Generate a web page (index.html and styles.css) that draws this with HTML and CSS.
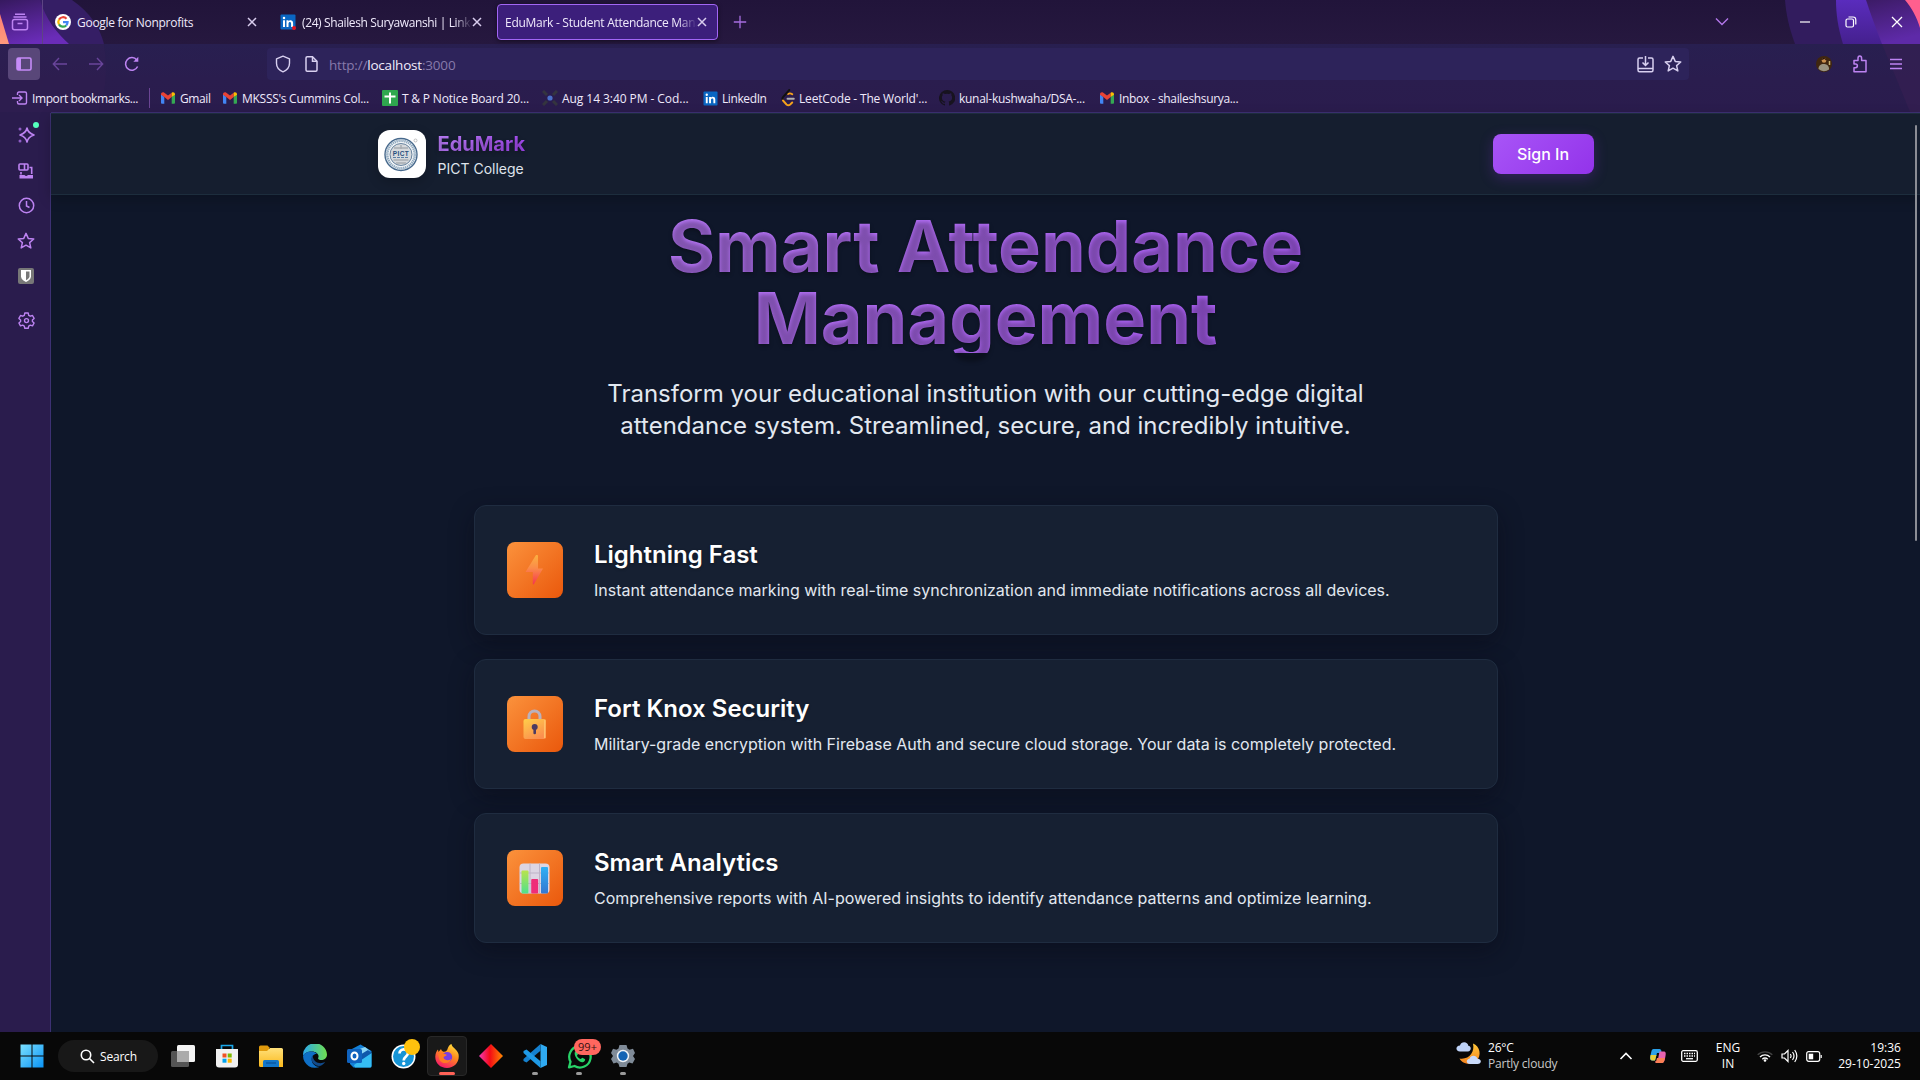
FILE: index.html
```html
<!DOCTYPE html>
<html lang="en">
<head>
<meta charset="utf-8">
<title>EduMark - Student Attendance Management</title>
<link rel="stylesheet" href="styles.css">
</head>
<body>
<svg class="defs" width="0" height="0" aria-hidden="true">
  <defs>
    <linearGradient id="bolt" x1="0" y1="0" x2="0" y2="1"><stop offset="0" stop-color="#fbb040"/><stop offset=".45" stop-color="#fb8a4a"/><stop offset="1" stop-color="#f4364f"/></linearGradient>
    <linearGradient id="gold" x1="0" y1="0" x2=".6" y2="1"><stop offset="0" stop-color="#ffcf4a"/><stop offset="1" stop-color="#fb8f4f"/></linearGradient>
    <linearGradient id="win" x1="0" y1="0" x2="1" y2="1"><stop offset="0" stop-color="#7be0ff"/><stop offset="1" stop-color="#0a93f5"/></linearGradient>
    <linearGradient id="folder" x1="0" y1="0" x2="0" y2="1"><stop offset="0" stop-color="#ffe07a"/><stop offset="1" stop-color="#fbb91c"/></linearGradient>
    <linearGradient id="edgeA" x1="0" y1="0" x2="1" y2="0"><stop offset="0" stop-color="#2aa8ee"/><stop offset="1" stop-color="#6fe04e"/></linearGradient>
    <linearGradient id="fox" x1=".8" y1="0" x2=".3" y2="1"><stop offset="0" stop-color="#ffe13c"/><stop offset=".45" stop-color="#ff8a1e"/><stop offset="1" stop-color="#f5156c"/></linearGradient>
    <linearGradient id="dia" x1="0" y1="0" x2="1" y2="0"><stop offset="0" stop-color="#f03ab8"/><stop offset=".45" stop-color="#f40a16"/><stop offset="1" stop-color="#ff8a00"/></linearGradient>
    <linearGradient id="moon" x1="0" y1="0" x2="0" y2="1"><stop offset="0" stop-color="#ffc83a"/><stop offset="1" stop-color="#f5821c"/></linearGradient>
    <linearGradient id="gbar" x1="0" y1="0" x2="0" y2="1"><stop offset="0" stop-color="#b9e34c"/><stop offset="1" stop-color="#4fe08c"/></linearGradient>
    <linearGradient id="bbar" x1="0" y1="0" x2="0" y2="1"><stop offset="0" stop-color="#2fb0f5"/><stop offset="1" stop-color="#3577d0"/></linearGradient>
    <linearGradient id="violet" x1="0" y1="0" x2=".4" y2="1"><stop offset="0" stop-color="#36195f"/><stop offset="1" stop-color="#6a2cb8"/></linearGradient>
    <linearGradient id="violetB" x1="0" y1="0" x2="0" y2="1"><stop offset="0" stop-color="#5a2cbd"/><stop offset="1" stop-color="#45208e"/></linearGradient>
    <linearGradient id="violetC" x1="0" y1="0" x2=".3" y2="1"><stop offset="0" stop-color="#3c1b66"/><stop offset="1" stop-color="#5e2aa8"/></linearGradient>
    <linearGradient id="peach" x1="0" y1="0" x2="0" y2="1"><stop offset="0" stop-color="#ff7f74"/><stop offset="1" stop-color="#ff9a7c"/></linearGradient>
    <symbol id="gmail" viewBox="0 0 16 16"><path d="M1 4v8.500c0 .8.5 1.300 1.200 1.300H4.300V7z" fill="#4285f4"/><path d="M15 4v8.500c0 .8-.5 1.300-1.200 1.300h-2.100V7z" fill="#34a853"/><path d="M1 4.200C1 2.300 3 1.700 4.300 2.700L8 5.500l3.700-2.800v4.300L8 9.900 4.300 7.100 1 4.700z" fill="#ea4335"/><path d="M11.700 2.700C13 1.700 15 2.300 15 4.200v.6L11.700 7.100z" fill="#fbbc04"/></symbol>
    <symbol id="linkedin" viewBox="0 0 16 16"><rect x=".5" y=".5" width="15" height="15" rx="1" fill="#0a66c2"/><path d="M3 6.300h2V13H3zM6.500 6.300h2v1c.9-1.700 4.600-1.700 4.600 1.700v4h-2V9.700c0-2.200-2.600-2-2.600 0V13h-2z" fill="#fff"/><circle cx="4" cy="4" r="1.250" fill="#fff"/></symbol>
    <symbol id="close" viewBox="0 0 10 10"><path d="M1 1l8 8M9 1L1 9" stroke="currentColor" stroke-width="1.500" fill="none"/></symbol>
    <symbol id="star" viewBox="0 0 16 16"><path d="M8 1.200l2 4.500 4.900.5-3.700 3.200 1.100 4.800L8 11.700l-4.300 2.500 1.100-4.800L1.100 6.200 6 5.700z" fill="none" stroke="currentColor" stroke-width="1.300" stroke-linejoin="round"/></symbol>
  </defs>
</svg>

<div class="screen">
  <header class="browser">
    <svg class="theme theme-left" width="150" height="112" viewBox="0 0 150 112"><path d="M0 0h72c18 12 28 28 32 44H0z" fill="#351e65"/><path d="M0 0h40c6 20 17 33 29 44H0z" fill="url(#violet)"/><path d="M0 14l9 30H0z" fill="url(#peach)"/><path d="M0 44h104c4 26 2 48-6 68H0z" fill="#352052" opacity=".35"/></svg>
    <svg class="theme theme-right" width="150" height="112" viewBox="0 0 150 112"><path d="M15 0h135v44H25C19 28 16 14 15 0z" fill="#321c5e"/><path d="M66 0h40l16 44H73C68 28 66 14 66 0z" fill="url(#violetB)"/><path d="M96 0h54v44h-38C105 26 100 12 96 0z" fill="url(#violetC)"/><path d="M135 0h15v28c-3-11-9-21-15-28z" fill="#ff5f8e"/><path d="M112 44h38v68h-10z" fill="#3a2054" opacity=".5"/></svg>

    <div class="tabs">
      <div class="view-btn"><svg width="18" height="18" viewBox="0 0 18 18" fill="none" stroke="#bd83f2" stroke-width="1.500"><path d="M4 1.200h10M2.500 4h13"/><rect x="1.500" y="6.500" width="15" height="10.300" rx="2"/><path d="M6.500 10.500h5"/></svg></div>
      <div class="tab">
        <svg class="fav" width="16" height="16" viewBox="0 0 16 16"><circle cx="8" cy="8" r="8" fill="#fff"/><g fill="none" stroke-width="2.200"><path d="M11.500 4.700A4.700 4.700 0 0 0 4 5.600" stroke="#ea4335"/><path d="M4 5.600a4.700 4.700 0 0 0 0 4.800" stroke="#fbbc04"/><path d="M4 10.400a4.700 4.700 0 0 0 7.200 1.100" stroke="#34a853"/><path d="M11.200 11.500c1-1 1.400-2 1.400-3.400H8" stroke="#4285f4"/></g></svg>
        <span class="tab-label">Google for Nonprofits</span>
        <svg class="x" width="10" height="10"><use href="#close"/></svg>
      </div>
      <div class="tab tab-two">
        <svg class="fav" width="16" height="16" viewBox="0 0 16 16"><use href="#linkedin"/><circle cx="14" cy="14" r="2" fill="#e3101c"/></svg>
        <span class="tab-label fade">(24) Shailesh Suryawanshi | LinkedIn</span>
        <svg class="x" width="10" height="10"><use href="#close"/></svg>
      </div>
      <div class="tab active">
        <span class="tab-label fade">EduMark - Student Attendance Management</span>
        <svg class="x" width="10" height="10"><use href="#close"/></svg>
      </div>
      <svg class="plus" width="14" height="14" viewBox="0 0 14 14"><path d="M7 .8v12.400M.8 7h12.400" stroke="#a66ee0" stroke-width="1.300"/></svg>
      <div class="window-controls">
        <svg width="14" height="10" viewBox="0 0 14 10"><path d="M1 1.500l6 6 6-6" fill="none" stroke="#b277ea" stroke-width="1.400"/></svg>
        <svg width="12" height="12" viewBox="0 0 12 12"><path d="M1 6h10" stroke="#fff" stroke-width="1.200"/></svg>
        <svg width="12" height="12" viewBox="0 0 12 12" fill="none" stroke="#fff" stroke-width="1.200"><rect x="1" y="3" width="7.500" height="8" rx="1.500"/><path d="M3.500 1h4.500q2.800 0 2.800 2.800V8.500"/></svg>
        <svg width="12" height="12" viewBox="0 0 12 12"><path d="M1 1l10 10M11 1L1 11" stroke="#fff" stroke-width="1.300"/></svg>
      </div>
    </div>

    <div class="nav">
      <div class="nav-left">
        <div class="side-toggle"><svg width="16" height="14" viewBox="0 0 16 14"><rect x="1" y="1" width="14" height="12" rx="1.500" fill="none" stroke="#c58bf8" stroke-width="1.600"/><path d="M1 1h4v12H1z" fill="#c58bf8"/></svg></div>
        <svg width="16" height="14" viewBox="0 0 16 14" fill="none" stroke="#69459a" stroke-width="1.400"><path d="M15 7H1.500M7 1L1.300 7 7 13"/></svg>
        <svg width="16" height="14" viewBox="0 0 16 14" fill="none" stroke="#69459a" stroke-width="1.400"><path d="M1 7h13.500M9 1l5.700 6L9 13"/></svg>
        <svg width="16" height="16" viewBox="0 0 16 16" fill="none" stroke="#bd83f2" stroke-width="1.500"><path d="M13.600 10.500A6.300 6.300 0 1 1 12.800 4"/><path d="M14.300.8v5H9.300z" fill="#bd83f2" stroke="none"/></svg>
      </div>
      <div class="urlbar">
        <svg width="16" height="18" viewBox="0 0 16 18" fill="none" stroke="#d8d0f0" stroke-width="1.400"><path d="M8 1.200l6.500 2.600v4.500c0 4-2.700 7-6.500 8.500-3.800-1.500-6.500-4.500-6.500-8.500V3.800z" stroke-linejoin="round"/></svg>
        <svg class="doc" width="13" height="16" viewBox="0 0 13 16" fill="none" stroke="#d8d0f0" stroke-width="1.500"><path d="M1 2q0-1.200 1.200-1.200H7.500L12 5.300V14q0 1.200-1.200 1.200H2.200Q1 15.200 1 14z"/><path d="M7.500 1v4.300H12" /></svg>
        <span class="url">http://<b>localhost</b>:3000</span>
        <svg class="install" width="17" height="17" viewBox="0 0 17 17" fill="none" stroke="#d8d0f0" stroke-width="1.500"><path d="M6 2H2.500Q1 2 1 3.500v10.500q0 1.800 1.500 1.800h12q1.500 0 1.500-1.800V3.500Q16 2 14.500 2H11M1 12.500h15M8.500 0v8M5.500 6.500l3 3 3-3"/></svg>
        <svg class="fav-star" width="18" height="18"><use href="#star"/></svg>
      </div>
      <div class="nav-right">
        <svg width="16" height="16" viewBox="0 0 16 16"><circle cx="8" cy="8" r="8" fill="#40260f"/><path d="M2.500 13c0-4 3-5.500 6-5s5 2.500 4.500 5.500A8 8 0 0 1 2.500 13z" fill="#9a9380"/><circle cx="8" cy="4.500" r="2.300" fill="#c98f4e"/><path d="M6 4c0-3 4.500-2.500 4.300.8L8.500 3z" fill="#2a1510"/><path d="M13.500 5v4" stroke="#c6b070" stroke-width="1.500"/></svg>
        <svg width="16" height="18" viewBox="0 0 16 18" fill="none" stroke="#bd83f2" stroke-width="1.500"><path d="M2 16.800V12.700h1.500c2.500 0 2.500-3.700 0-3.700H2V5.500h4V3.200c0-3 3.600-3 3.600 0v2.300H14v11.300z" stroke-linejoin="round"/></svg>
        <svg class="menu" width="14" height="12" viewBox="0 0 14 12" stroke="#bd83f2" stroke-width="1.300"><path d="M1 1.500h12M1 6h12M1 10.500h12"/></svg>
      </div>
    </div>

    <div class="bookmarks">
      <span class="bm bm-import"><svg width="16" height="14" viewBox="0 0 16 14" fill="none" stroke="#bd83f2" stroke-width="1.400"><path d="M5.500 4V2.500q0-1.500 1.500-1.500h6q1.500 0 1.500 1.500v9q0 1.500-1.500 1.500H7q-1.500 0-1.500-1.500V10M0 7h10M7 4l3 3-3 3"/></svg>Import bookmarks...</span>
      <span class="bm"><svg width="16" height="16"><use href="#gmail"/></svg>Gmail</span>
      <span class="bm loose"><svg width="16" height="16"><use href="#gmail"/></svg>MKSSS's Cummins Col...</span>
      <span class="bm looser"><svg width="16" height="16" viewBox="0 0 16 16"><rect width="16" height="16" rx="1" fill="#2fa84f"/><path d="M8 2.500v11M2.500 6.500h11" stroke="#fff" stroke-width="2"/></svg>T &amp; P Notice Board 20...</span>
      <span class="bm loosest"><svg width="16" height="16" viewBox="0 0 16 16"><path d="M1 1l4 4M15 1l-4 4M1 15l4-4M15 15l-4-4" stroke="#34343f" stroke-width="3"/><circle cx="8" cy="8" r="2.600" fill="#4a6fc8"/></svg>Aug 14 3:40 PM - Cod...</span>
      <span class="bm"><svg width="15" height="15"><use href="#linkedin" width="15" height="15"/></svg>LinkedIn</span>
      <span class="bm looser"><svg width="14" height="18" viewBox="0 0 14 18" fill="none" stroke-width="1.900" stroke-linecap="round"><path d="M11.300 5.300Q9 3.600 7 5" stroke="#f6a21b"/><path d="M8.300 1L2 8Q.8 9.500 2 11" stroke="#111"/><path d="M2 11.500l3.500 4q1.800 1.600 3.700 0l2-2" stroke="#f6a21b"/><path d="M6.500 9.700h6.300" stroke="#b3b1b0"/></svg>LeetCode - The World'...</span>
      <span class="bm loose"><svg width="16" height="16" viewBox="0 0 16 16"><path d="M8 0a8 8 0 0 0-2.500 15.600c.4 0 .5-.2.500-.4v-1.500c-2.200.5-2.700-1-2.700-1-.4-.9-.9-1.200-.9-1.200-.7-.5.1-.5.1-.5.800.1 1.200.8 1.200.8.700 1.300 1.900.9 2.300.7.100-.5.300-.9.500-1.100-1.800-.2-3.600-.9-3.600-4 0-.9.300-1.600.8-2.100-.1-.2-.4-1 .1-2.100 0 0 .7-.2 2.200.8a7.500 7.500 0 0 1 4 0c1.500-1 2.200-.8 2.200-.8.400 1.100.2 1.900.1 2.100.5.600.8 1.300.8 2.100 0 3.100-1.900 3.700-3.600 3.900.3.300.6.800.6 1.500v2.400c0 .2.100.5.600.4A8 8 0 0 0 8 0z" fill="#17131f"/></svg>kunal-kushwaha/DSA-...</span>
      <span class="bm inbox"><svg width="16" height="16"><use href="#gmail"/></svg>Inbox - shaileshsurya...</span>
    </div>
  </header>

  <div class="middle">
    <aside class="sidebar">
      <div class="ai"><svg width="18" height="18" viewBox="0 0 18 18"><path d="M10 2q1 5 7 7-6 2-7 7-1-5-7-7 6-2 7-7z" fill="none" stroke="#bd83f2" stroke-width="1.600" stroke-linejoin="round"/><circle cx="3" cy="3" r="1.500" fill="#8d5cc4"/><circle cx="3" cy="15" r="1.500" fill="#8d5cc4"/></svg><i class="dot"></i></div>
      <svg width="18" height="16" viewBox="0 0 18 16" fill="none" stroke="#bd83f2" stroke-width="1.600"><rect x="2" y="1" width="9" height="6" rx="1"/><path d="M7.500 1v6M12.500 4.500h2.200V11M4 9v2.500" /><path d="M2.500 12h5q1.500 2 3.500 0h5v3.500h-13.500z" fill="#bd83f2" stroke="none"/></svg>
      <svg width="17" height="17" viewBox="0 0 17 17" fill="none" stroke="#bd83f2" stroke-width="1.500"><circle cx="8.500" cy="8.500" r="7.200"/><path d="M8.500 4v5l3 1.500"/></svg>
      <svg class="violet" width="18" height="18"><use href="#star"/></svg>
      <svg width="16" height="16" viewBox="0 0 16 16"><rect width="16" height="16" rx="2" fill="#777"/><path d="M3 2h10v6.500c0 2.500-2.500 4.500-5 5.500-2.500-1-5-3-5-5.500z" fill="#fff"/><path d="M8 3.600h3.500v5c0 1.500-1.700 2.800-3.500 3.700z" fill="#777"/></svg>
      <svg class="gear" width="17" height="17" viewBox="0 0 17 17" fill="none" stroke="#bd83f2" stroke-width="1.400" stroke-linejoin="round"><path d="M6.800 1h3.400l.5 2.300 1.600.9 2.200-.7 1.600 2.900-1.700 1.500v1.600l1.700 1.500-1.600 2.900-2.200-.7-1.600.9-.5 2.200H6.800l-.5-2.200-1.600-.9-2.200.7L.9 11l1.700-1.500V7.900L.9 6.400l1.600-2.900 2.200.7 1.600-.9z"/><circle cx="8.500" cy="8.600" r="2"/></svg>
    </aside>

    <div class="page">
      <div class="site-header">
        <div class="site-inner">
          <div class="brand">
            <div class="logo"><svg width="48" height="48" viewBox="0 0 48 48"><circle cx="23" cy="24.500" r="16" fill="#f3f6f8" stroke="#47698c" stroke-width="1.400"/><circle cx="23" cy="24.500" r="13.800" fill="none" stroke="#8fa8be" stroke-width="2.600" stroke-dasharray="1.300 .7"/><circle cx="23" cy="24.500" r="11" fill="#d6d9dc" stroke="#47698c" stroke-width=".8"/><path d="M16 18h14M15.500 30h15M18 33h10M23 15v4" stroke="#a8adb2" stroke-width="1.500"/><path d="M15 27.500h16" stroke="#5a7fa5" stroke-width="1.200" stroke-dasharray="3 1"/><text x="23" y="25.500" text-anchor="middle" class="crest">PICT</text><circle cx="37.500" cy="10.500" r="1.500" fill="none" stroke="#aaa" stroke-width=".7"/></svg></div>
            <div class="brand-text"><div class="brand-name">EduMark</div><div class="brand-sub">PICT College</div></div>
          </div>
          <button class="signin">Sign In</button>
        </div>
      </div>

      <main class="hero">
        <h1>Smart Attendance<br>Management</h1>
        <p class="lead">Transform your educational institution with our cutting-edge digital<br>attendance system. Streamlined, secure, and incredibly intuitive.</p>
        <div class="cards">
          <section class="card">
            <div class="tile"><svg width="30" height="32" viewBox="0 0 30 32"><path d="M16 1h1.200q.8 0 .8 1v12.500h5L14 30q-.9 1.200-1.200-.2V18H5.500z" fill="url(#bolt)"/></svg></div>
            <div><h2>Lightning Fast</h2><p>Instant attendance marking with real-time synchronization and immediate notifications across all devices.</p></div>
          </section>
          <section class="card">
            <div class="tile"><svg width="30" height="32" viewBox="0 0 30 32"><path d="M9 13V8.500a5.500 5.500 0 0 1 11 0V13" fill="none" stroke="#b9b1bd" stroke-width="3"/><rect x="3.500" y="11" width="22.500" height="20" rx="2" fill="url(#gold)"/><path d="M24.700 12v18" stroke="#ffc06a" stroke-width="1.500"/><circle cx="14.700" cy="19" r="3" fill="#4c3b62"/><path d="M14.700 20v5" stroke="#4c3b62" stroke-width="2.600" stroke-linecap="round"/></svg></div>
            <div><h2>Fort Knox Security</h2><p>Military-grade encryption with Firebase Auth and secure cloud storage. Your data is completely protected.</p></div>
          </section>
          <section class="card">
            <div class="tile"><svg width="32" height="32" viewBox="0 0 32 32"><rect x=".5" y="1.500" width="30" height="30" rx="4" fill="#dcd5e3"/><path d="M11 1.500v30M20.500 1.500v30M.5 11h30M.5 21.500h30" stroke="#bdb3c7" stroke-width="1"/><rect x="2.500" y="8.500" width="7" height="23" rx="1" fill="url(#gbar)"/><rect x="12.200" y="17" width="7" height="14.500" rx="1" fill="#ef2d78"/><rect x="22" y="5" width="7" height="26.500" rx="1" fill="url(#bbar)"/></svg></div>
            <div><h2>Smart Analytics</h2><p>Comprehensive reports with AI-powered insights to identify attendance patterns and optimize learning.</p></div>
          </section>
        </div>
      </main>
      <div class="scroll"></div>
    </div>
  </div>

  <footer class="taskbar">
    <div class="apps">
      <div class="app"><svg width="24" height="24" viewBox="0 0 24 24"><path d="M.500 .500h11v11H.500zM12.500 .500h11v11h-11zM.500 12.500h11v11H.500zM12.500 12.500h11v11h-11z" fill="url(#win)"/></svg></div>
      <div class="search"><svg width="15" height="15" viewBox="0 0 15 15" fill="none" stroke="#fff" stroke-width="1.600"><circle cx="6" cy="6" r="4.700"/><path d="M9.500 9.500l4.500 4.500"/></svg>Search</div>
      <div class="app"><svg width="24" height="24" viewBox="0 0 24 24"><rect x="6" y="1" width="18" height="17" rx="1.500" fill="#f4f4f4"/><rect x="0" y="7" width="18" height="16" rx="1.500" fill="#555"/><path d="M6 7h12v11H6z" fill="#ababab"/></svg></div>
      <div class="app"><svg width="24" height="24" viewBox="0 0 24 24"><path d="M6.500 6V1.500h11V6" fill="none" stroke="#1ba8ea" stroke-width="1.700"/><path d="M1 5h22v15.500q0 3-3 3H4q-3 0-3-3z" fill="#f1f1f1"/><path d="M7.500 9.500h4v4h-4z" fill="#f05123"/><path d="M12.700 9.500h4v4h-4z" fill="#7eb900"/><path d="M7.500 14.700h4v4h-4z" fill="#00a3ee"/><path d="M12.700 14.700h4v4h-4z" fill="#feb800"/></svg></div>
      <div class="app"><svg width="24" height="24" viewBox="0 0 24 24"><path d="M0 3q0-1.500 1.500-1.500h7L11 4h-1v4H0z" fill="#e09a0c"/><path d="M0 7h8l3-3h11.500Q24 4 24 5.500V23H1.500Q0 23 0 21.500z" fill="url(#folder)"/><path d="M4 23v-5.500Q4 16 5.500 16h13q1.500 0 1.500 1.500V23z" fill="#1276c9"/><path d="M7 19h10" stroke="#0a57a0" stroke-width="1.400"/></svg></div>
      <div class="app"><svg width="24" height="24" viewBox="0 0 24 24"><path d="M0 12A12 12 0 0 1 24 10.500c0 4-3.500 6-7 5.500-2.500-.5-2-2-1.500-3 .5-3-2.500-5.500-6.500-5.500C4.500 7.500 1 9.500 0 12z" fill="url(#edgeA)"/><path d="M0 12c1.500-3 5-4.700 8.500-4.400 2.500.2 4.200 1 5.500 2.400-4-.5-6 3.500-5 7.500 1.200 4 5.500 6 8.500 5A12 12 0 0 1 0 12z" fill="#0f6fc5"/><path d="M9.500 11c-2 3.500-1 8.500 4 10.500 3.500 1.400 6.800-.5 8.700-3.500-3 1.500-7 1.700-9.700-.5C10.300 15.800 9.700 13 9.500 11z" fill="#114a8b"/></svg></div>
      <div class="app"><svg width="25" height="24" viewBox="0 0 25 24"><path d="M3 6l10.500-5.500L24.500 7v15q0 1.500-1.500 1.500H6.500L3 20z" fill="#1380d8"/><path d="M10 6l8-3 5 4-10 6z" fill="#8bd6f7"/><path d="M24.500 9L7 21l1 2.500h15q1.500 0 1.500-1.500z" fill="#35bdf3"/><path d="M24.500 9L14 16l-3-4 10-6z" fill="#0f58aa"/><rect x="0" y="5" width="15" height="14" rx="1.500" fill="#0f62be"/><ellipse cx="7.500" cy="12" rx="3" ry="3.600" fill="none" stroke="#fff" stroke-width="2"/></svg></div>
      <div class="app help"><svg width="25" height="25" viewBox="0 0 25 25"><circle cx="12.500" cy="12.500" r="12" fill="#fff"/><circle cx="12.500" cy="12.500" r="10.500" fill="#1694d6"/><path d="M8.500 9.500c0-5.500 8.500-5.500 8.500-.5 0 3.500-4.300 3.500-4.300 7.500" fill="none" stroke="#fff" stroke-width="2.700"/><circle cx="12.700" cy="19.500" r="1.700" fill="#fff"/></svg><i class="amber"></i></div>
      <div class="app current"><svg width="24" height="24" viewBox="0 0 24 24"><path d="M12 24C5 24 0 19 .3 12.500c.1-3 1.200-5.500 2.700-7L3.500 8 6 5c.5 1.500 1 2.200 2.500 2.700C11 8 12.500 6 12.500 5c1-3 2.500-4.500 4-5 0 3 5.500 5 7 10C25 18 19.500 24 12 24z" fill="url(#fox)"/><circle cx="12.200" cy="13" r="5" fill="#7a3de0"/><path d="M3 10c3-1.500 6-.5 9 1-1.500 1.500-3 1-3.500 2.500 1 3 5 3.500 7.500 1.500-1 5-9 5.500-11.500 1z" fill="#ff7a22"/></svg><i class="run-on"></i></div>
      <div class="app"><svg width="24" height="24" viewBox="0 0 24 24"><path d="M12 0l12 12-12 12L0 12z" fill="url(#dia)"/></svg></div>
      <div class="app"><svg width="24" height="24" viewBox="0 0 24 24"><path d="M17.500 0L24 3v18l-6.500 3z" fill="#2faaf2"/><path d="M17.500 0v6.700L3.500 18.500.5 17v-2z" fill="#1581cf"/><path d="M17.500 24v-6.700L3.500 5.500.5 7v2z" fill="#1f9ae6"/></svg><i class="run"></i></div>
      <div class="app"><svg width="25" height="25" viewBox="0 0 25 25"><path d="M2 23.300l1.500-5.500A10.700 10.700 0 1 1 7.500 22z" fill="none" stroke="#27d367" stroke-width="2.300" stroke-linejoin="round"/><path d="M8 7.500c.7-.8 1.600-.8 2 0l1 2.300c.2.600-1 1.500-1 1.900.8 1.700 2 2.700 3.600 3.400.5.100 1.200-1.400 1.800-1.300l2.400 1.200c1 .7-.3 3-2 3.200C12.500 19 6 12 8 7.500z" fill="#27d367"/></svg><b class="badge">99+</b><i class="run"></i></div>
      <div class="app"><svg width="24" height="24" viewBox="0 0 24 24"><path d="M8.500 1h7l1 3.500 2 1.200L22 4.800 24 9l-2 3 2 3-2.500 4.500-3.200-1-1.800 1.200-1 3.300h-7l-1-3.300-1.800-1.200-3.200 1L0 15l2-3-2-3 2-4.200 3.500.9 2-1.200z" fill="#7f8b98"/><circle cx="12" cy="12" r="6.200" fill="#eef2f6"/><circle cx="12" cy="12" r="4.700" fill="#1464b4"/></svg><i class="run"></i></div>
    </div>
    <div class="tray">
      <div class="weather"><svg width="26" height="24" viewBox="0 0 26 24"><path d="M17 1.500c7 2.500 9 12 3.500 17.500-5.500 5-14 3-17-2.500C13 18 19 10 17 1.500z" fill="url(#moon)"/><path d="M4 9.500c-5 0-4.500-6 0-6C5-1 12-.5 12.300 3.800c3.500.5 3.200 5.700-.5 5.700z" fill="#bfd3f8"/><path d="M14 22c-4.500 0-4-5-.5-5.200.8-4 7-4 8 0 4.500.2 4.500 5.200 0 5.200z" fill="#c9dafa"/></svg>
        <div class="w-text"><span>26°C</span><span class="dim">Partly cloudy</span></div></div>
      <svg width="14" height="8" viewBox="0 0 14 8" fill="none" stroke="#fff" stroke-width="1.600"><path d="M1.500 7L7 1.500 12.500 7"/></svg>
      <svg width="16" height="16" viewBox="0 0 16 16"><path d="M3.500 1h6q1.500 0 2 2L11 5H7L5 12.500H2C-.5 12.500 0 9 .7 6.500S1.500 1 3.500 1z" fill="#2aa0e8"/><path d="M.7 7h5.800L5 12.500H2C0 12.500 0 9 .7 7z" fill="#e6cf3c"/><path d="M9.500 3.500h4c2.500 0 2.500 2 2 4.500S14.500 15 12 15H7q-1.500 0-2-1.500h2.500z" fill="#e763b0"/><path d="M7 10h8c-.6 3-1.300 5-3 5H7q-1.500 0-2-1.500h1z" fill="#fb7f54"/></svg>
      <svg width="17" height="12" viewBox="0 0 17 12" fill="none" stroke="#fff" stroke-width="1.300"><rect x=".7" y=".7" width="15.600" height="10.600" rx="1.500"/><path d="M3 3.500h11M3 6h11" stroke-dasharray="1.500 1"/><path d="M5 8.700h7"/></svg>
      <div class="lang"><span>ENG</span><span>IN</span></div>
      <div class="status">
        <svg width="16" height="12" viewBox="0 0 16 12" fill="none" stroke-width="1.400"><path d="M.7 4.800a10.500 10.500 0 0 1 14.600 0" stroke="#444"/><path d="M3 7a7 7 0 0 1 10 0M5.300 9.200a4 4 0 0 1 5.400 0" stroke="#fff"/><circle cx="8" cy="10.500" r="1.300" fill="#fff"/></svg>
        <svg width="17" height="14" viewBox="0 0 17 14" fill="none" stroke="#fff" stroke-width="1.200"><path d="M1 5h2.500l3.500-3.500v11L3.500 9H1zM9.300 5q1.500 2 0 4M11.500 3q3 4 0 8M13.700 1q4.300 6 0 12"/></svg>
        <svg width="16" height="11" viewBox="0 0 16 11" fill="none" stroke="#fff" stroke-width="1.200"><rect x=".7" y=".7" width="13" height="9.600" rx="2"/><path d="M15.200 4v3"/><path d="M2.700 2.700h4.500v5.600H2.700z" fill="#fff" stroke="none"/></svg>
      </div>
      <div class="clock"><span>19:36</span><span>29-10-2025</span></div>
    </div>
  </footer>
</div>
</body>
</html>
```
FILE: styles.css
```css
* { box-sizing: border-box; }
body { margin: 0; background: #000; overflow: hidden; }
h1, h2, p { margin: 0; }
svg { display: block; flex: none; }
.defs { position: absolute; }

.screen {
  width: 1920px;
  height: 1080px;
  display: flex;
  flex-direction: column;
  font-family: "Open Sans", "Noto Sans", sans-serif;
  font-size: 12px;
  color: #efe9fb;
}

/* Browser chrome */
.browser {
  position: relative;
  height: 113px;
  flex: none;
  background: linear-gradient(#21143a, #26183f 44px, #281f50 44px, #2a1d4e 80px, #2a1c4d);
}
.theme { position: absolute; top: 0; }
.theme-left { left: 0; }
.theme-right { right: 0; }
.tabs, .nav, .bookmarks { position: relative; display: flex; align-items: center; }
.tabs { height: 44px; }
.view-btn { width: 43px; height: 44px; padding: 13px 0 0 11px; border-right: 1px solid #5d4484; }
.tab {
  display: flex;
  align-items: center;
  width: 226px;
  height: 36px;
  padding: 0 12px 0 12px;
}
.tab .fav { margin-right: 6px; }
.tab-two { width: 228px; padding: 0 15px 0 11px; }
.tab-label { flex: 1; min-width: 0; overflow: hidden; white-space: nowrap; letter-spacing: -.28px; }
.tab-two .tab-label { letter-spacing: -.38px; }
.fade { -webkit-mask-image: linear-gradient(90deg, #000 90%, transparent); mask-image: linear-gradient(90deg, #000 90%, transparent); }
.x { color: #d9cdee; }
.active {
  width: 221px;
  padding: 0 10px 0 7px;
  background: #3c1f7b;
  border: 1px solid #a266f5;
  border-radius: 4px;
  box-shadow: 0 1px 4px rgba(0, 0, 0, .5);
}
.plus { margin-left: 15px; }
.window-controls { margin-left: auto; display: flex; align-items: center; padding-right: 17px; gap: 34px; }
.window-controls svg:first-child { margin-right: 36px; }

.nav { height: 40px; justify-content: flex-start; }
.nav-left { width: 267px; display: flex; align-items: center; gap: 20px; padding-left: 8px; }
.side-toggle { display: grid; place-items: center; width: 32px; height: 32px; margin-right: -8px; border-radius: 4px; background: #594779; }
.urlbar { display: flex; align-items: center; width: 1422px; height: 32px; padding: 0 7px 0 8px; border-radius: 4px; background: #2d235a; }
.doc { margin-left: 14px; }
.url { margin-left: 11px; padding-top: 2px; font-size: 13.500px; letter-spacing: -.2px; color: #877aab; }
.url b { font-weight: 400; color: #f2edfc; }
.install { margin-left: auto; margin-right: 10px; }
.fav-star { color: #d8d0f0; }
.nav-right { display: flex; align-items: center; margin-left: 127px; gap: 20px; }
.menu { margin-left: 1px; }

.bookmarks {
  display: grid;
  grid-template-columns: 148px 62px 160px 160px 161px 78px 158px 160px 150px;
  height: 28px;
  padding: 0 0 0 12px;
  letter-spacing: -.4px;
}
.bm { display: flex; align-items: center; gap: 4px; white-space: nowrap; }
.bm-import { width: 138px; height: 20px; border-right: 1px solid #6b4594; }
.loose { letter-spacing: -.28px; }
.inbox { letter-spacing: -.34px; }
.looser { letter-spacing: -.18px; }
.loosest { letter-spacing: -.06px; }

/* Sidebar */
.middle { flex: 1; min-height: 0; display: flex; }
.sidebar {
  width: 51px;
  flex: none;
  display: flex;
  flex-direction: column;
  align-items: center;
  gap: 18px;
  padding: 14px 0 0 2px;
  margin-top: -1px;
  background: #2a1c4d;
  border-right: 1px solid #3d3173;
}
.ai { position: relative; margin-bottom: 1px; }
.dot { position: absolute; right: -4px; top: -4px; width: 6px; height: 6px; border-radius: 50%; background: #54ffbd; }
.violet { color: #bd83f2; }
.gear { margin-top: 10px; }

/* Page */
.page {
  position: relative;
  flex: 1;
  display: flex;
  flex-direction: column;
  background: #0f172a;
  border-top: 1px solid #3d3173;
  margin-top: -1px;
  font-family: Inter, "Liberation Sans", sans-serif;
}
.site-header {
  height: 82px;
  flex: none;
  background: #151e2f;
  border-bottom: 1px solid #1d2d3d;
  border-top: 1px solid #1d2d3d;
  box-shadow: 0 4px 12px rgba(0, 0, 0, .22);
}
.site-inner { width: 1216px; height: 100%; margin: 0 auto; display: flex; align-items: center; justify-content: space-between; }
.brand { display: flex; align-items: center; gap: 12px; }
.logo { width: 48px; height: 48px; border-radius: 12px; background: #fff; box-shadow: 0 4px 12px rgba(0, 0, 0, .2); }
.crest { font: 700 6.500px "Liberation Sans", sans-serif; fill: #284f7c; letter-spacing: .4px; }
.brand-name {
  font-size: 20px;
  font-weight: 700;
  line-height: 28px;
  color: transparent;
  background: linear-gradient(135deg, #c084fc, #a040f0);
  -webkit-background-clip: text;
  background-clip: text;
  text-shadow: 0 2px 4px rgba(0, 0, 0, .25);
}
.brand-sub { padding-top: 1px; margin-bottom: -1px; font-size: 14px; line-height: 20px; color: #dfe4ec; }
.signin {
  width: 101px;
  height: 40px;
  padding: 0;
  border: 0;
  border-radius: 8px;
  color: #fff;
  font: 500 16px Inter, sans-serif;
  background: linear-gradient(135deg, #a855f7, #9333ea);
  box-shadow: 0 4px 14px rgba(147, 51, 234, .25);
}
.hero { display: flex; flex-direction: column; align-items: center; padding-top: 14px; }
h1 {
  width: 1024px;
  padding-top: 1px;
  height: 144px;
  font-size: 72px;
  line-height: 72px;
  font-weight: 700;
  text-align: center;
  color: transparent;
  background: linear-gradient(135deg, #bd80fa, #a855f7);
  -webkit-background-clip: text;
  background-clip: text;
  text-shadow: 0 2px 4px rgba(0, 0, 0, .3);
}
.lead { margin-top: 25px; font-size: 24px; line-height: 32px; text-align: center; color: #e2e8f0; white-space: nowrap; }
.cards { display: flex; flex-direction: column; gap: 24px; width: 1024px; margin-top: 63px; }
.card {
  display: flex;
  align-items: center;
  gap: 32px;
  height: 130px;
  padding: 0 32px;
  background: #162032;
  border: 1px solid #1f2c40;
  border-radius: 12px;
  box-shadow: 0 8px 24px rgba(8, 8, 20, .45);
}
.tile { display: grid; place-items: center; width: 56px; height: 56px; flex: none; border-radius: 8px; background: linear-gradient(135deg, #fb923c, #ea580c); }
h2 { padding-top: 1px; font-size: 24px; line-height: 32px; font-weight: 600; color: #fff; text-shadow: 0 1px 3px rgba(0, 0, 0, .3); }
.card p { margin-top: 7px; font-size: 16px; line-height: 24px; color: #e2e8f0; white-space: nowrap; }
.card h2, .card p { margin-left: -.5px; }
.scroll { position: absolute; right: 3px; top: 12px; width: 2px; height: 416px; border-radius: 1px; background: #8b8d95; }

/* Taskbar */
.taskbar { height: 48px; flex: none; display: flex; justify-content: space-between; background: #080808; color: #fff; }
.apps { display: flex; align-items: center; padding-left: 12px; gap: 4px; }
.app { position: relative; width: 40px; height: 40px; display: grid; place-items: center; }
.search { display: flex; align-items: center; gap: 5px; width: 100px; height: 32px; margin: 0 1px 0 2px; padding-left: 22px; border-radius: 16px; background: #181818; letter-spacing: -.2px; }
.app.current { background: #191919; border: 1px solid #282828; border-radius: 4px; }
.run, .run-on { position: absolute; bottom: 1px; left: 17px; width: 6px; height: 3px; border-radius: 2px; background: #9a9a9a; }
.run-on { left: 11px; bottom: 0; width: 16px; background: #ff6257; }
.amber { position: absolute; left: 21px; top: 3px; width: 16px; height: 16px; border-radius: 50%; background: #ffc20e; }
.badge { position: absolute; left: 15px; top: 3px; width: 27px; height: 16px; border-radius: 8px; background: #ff675f; color: #311; font-size: 11px; font-weight: 400; line-height: 16px; text-align: center; }
.tray { display: flex; align-items: center; padding-right: 19px; }
.weather { display: flex; align-items: center; gap: 6px; width: 163px; letter-spacing: -.2px; }
.weather svg { margin-top: -4px; }
.w-text, .lang, .clock { display: flex; flex-direction: column; line-height: 16px; }
.dim { color: #c9c9c9; }
.tray > svg { margin-right: 17px; }
.tray > svg + svg { margin-right: 15px; }
.lang { width: 32px; margin-left: -1px; align-items: center; }
.status { display: flex; align-items: center; gap: 8px; margin-left: 13px; }
.clock { width: 79px; align-items: flex-end; letter-spacing: .02px; }
```
